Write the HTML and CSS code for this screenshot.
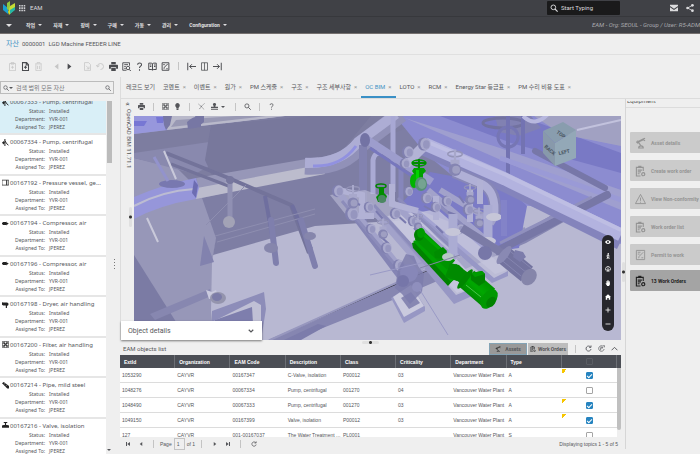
FILE: index.html
```html
<!DOCTYPE html>
<html lang="ko">
<head>
    <meta charset="UTF-8">
    <meta name="viewport" content="width=device-width, initial-scale=1.0">
    <title>EAM - 자산</title>
    <link rel="stylesheet" href="styles.css">
</head>
<body>
    <!-- icon sprite -->
    <svg class="sprite" aria-hidden="true">
        <symbol id="i-print" viewBox="0 0 12 12"><path fill="currentColor" d="M3 0h6v3H3zM1 3.500h10a1 1 0 0 1 1 1V9h-2.500V7h-7v2H0V4.500a1 1 0 0 1 1-1zM3 8h6v4H3z"/></symbol>
        <symbol id="i-clip" viewBox="0 0 12 12"><path fill="none" stroke="currentColor" d="M2 2h8v9.500H2zM4 .8h4v2H4zM6 5v4M4 7h4"/></symbol>
        <symbol id="i-new" viewBox="0 0 12 12"><path fill="none" stroke="currentColor" stroke-width="1.400" d="M2 .8h5.500L10 3.500v7.700H2zM7 1v3h3M6 5v4M4 7h4"/></symbol>
        <symbol id="i-trash" viewBox="0 0 12 12"><path fill="none" stroke="currentColor" d="M1.500 2.500h9M4 2V.8h4V2M2.500 3v8.500h7V3M4.700 5v4.500M7.300 5v4.500"/></symbol>
        <symbol id="i-left" viewBox="0 0 12 12"><path fill="currentColor" d="M8.500 2v8L3.500 6z"/></symbol>
        <symbol id="i-right" viewBox="0 0 12 12"><path fill="currentColor" d="M3.500 2v8l5-4z"/></symbol>
        <symbol id="i-first" viewBox="0 0 12 12"><path fill="currentColor" d="M2 2h2v8H2zM10 2v8L4.500 6z"/></symbol>
        <symbol id="i-last" viewBox="0 0 12 12"><path fill="currentColor" d="M8 2h2v8H8zM2 2v8l5.500-4z"/></symbol>
        <symbol id="i-copy" viewBox="0 0 12 12"><path fill="none" stroke="currentColor" d="M2 .8h5.500L10 3.500v7.700H2zM4 5l4 4M8 6v3H5"/></symbol>
        <symbol id="i-undo" viewBox="0 0 12 12"><path fill="none" stroke="currentColor" stroke-width="1.200" d="M2 6a4 4 0 1 1 4 4M.5 4L2 6.500 4.500 5"/></symbol>
        <symbol id="i-preview" viewBox="0 0 12 12"><path fill="none" stroke="currentColor" stroke-width="1.200" d="M10 5V1H1v10h5M3 3.500h5M3 6h2M3 8.500h2M9.500 10L12 12"/><circle cx="8" cy="8" r="2.300" fill="none" stroke="currentColor" stroke-width="1.200"/></symbol>
        <symbol id="i-help" viewBox="0 0 12 12"><path fill="none" stroke="currentColor" stroke-width="1.400" d="M3.500 3.500C3.500.5 8.800.5 8.700 3.500 8.700 5.500 6 5.500 6 8M6 9.800v1.700"/></symbol>
        <symbol id="i-book" viewBox="0 0 12 12"><path fill="none" stroke="currentColor" stroke-width="1.300" d="M1 1.500h4l1 1 1-1h4V10H7l-1 1-1-1H1zM6 2.500V11M8 4h2M8 6h2M2.500 4h2M2.500 6h2"/></symbol>
        <symbol id="i-edit" viewBox="0 0 12 12"><path fill="none" stroke="currentColor" stroke-width="1.300" d="M1.500 1h9v10h-9zM4 9l.5-2L9 2.500M3 3.500h2M7 9h2"/></symbol>
        <symbol id="i-inleft" viewBox="0 0 12 12"><path fill="none" stroke="currentColor" stroke-width="1.300" d="M1 1v10M12 6H3.500M6.500 3l-3 3 3 3"/></symbol>
        <symbol id="i-cols" viewBox="0 0 12 12"><path fill="none" stroke="currentColor" d="M2 1h8v10H2zM6 1v10"/></symbol>
        <symbol id="i-inright" viewBox="0 0 12 12"><path fill="none" stroke="currentColor" stroke-width="1.300" d="M11 1v10M0 6h8.500M5.500 3l3 3-3 3"/></symbol>
        <symbol id="i-search" viewBox="0 0 12 12"><circle cx="5" cy="5" r="3.500" fill="none" stroke="currentColor" stroke-width="1.400"/><path stroke="currentColor" stroke-width="1.600" d="M7.500 7.500L11.500 11.500"/></symbol>
        <symbol id="i-grid" viewBox="0 0 12 12"><path fill="none" stroke="currentColor" d="M1 1h10v10H1zM1 4.300h10M1 7.700h10M4.300 1v10M7.700 1v10M1 1l10 10M11 1L1 11"/></symbol>
        <symbol id="i-bulb" viewBox="0 0 12 12"><path fill="currentColor" d="M6 0a4 4 0 0 1 2.200 7.300V9H3.800V7.300A4 4 0 0 1 6 0zM4.300 9.500h3.400V12H4.300z"/></symbol>
        <symbol id="i-nodes" viewBox="0 0 12 12"><path fill="none" stroke="currentColor" stroke-width="1.200" stroke-dasharray="2 1" d="M1 2l4.500 4L11 1M5.500 6L2 11M5.500 6l5 5"/></symbol>
        <symbol id="i-stamp" viewBox="0 0 12 12"><path fill="currentColor" d="M6 0a2.600 2.600 0 0 1 1.500 4.800V6.500H12V9H0V6.500h4.500V4.800A2.600 2.600 0 0 1 6 0zM0 10.500h12V12H0z"/></symbol>
        <symbol id="i-reload" viewBox="0 0 12 12"><path fill="none" stroke="currentColor" stroke-width="1.500" d="M9.500 3.500A4.300 4.300 0 1 0 10.300 7M10.300.8V4H7"/></symbol>
        <symbol id="i-export" viewBox="0 0 12 12"><path fill="none" stroke="currentColor" stroke-width="1.200" d="M10.500 7A4.700 4.700 0 1 1 9 2.500M4.500 9V4.500H8L6.500 3M8 4.500L6.500 6.500M9 1h2v3"/></symbol>
        <symbol id="i-up" viewBox="0 0 12 12"><path fill="none" stroke="currentColor" stroke-width="1.600" d="M1 9l5-5 5 5"/></symbol>
        <symbol id="i-down" viewBox="0 0 12 12"><path fill="none" stroke="currentColor" stroke-width="2.400" d="M1.500 3.500L6 8l4.500-4.500"/></symbol>
        <symbol id="i-mail" viewBox="0 0 12 12"><path fill="currentColor" d="M0 1h12v2L6 7 0 3zM0 5l6 4 6-4v6H0z"/></symbol>
        <symbol id="i-share" viewBox="0 0 12 12"><path fill="none" stroke="currentColor" stroke-width="1.300" d="M9.500 2L2.500 6l7 4"/><g fill="currentColor"><circle cx="9.700" cy="2" r="2"/><circle cx="2.300" cy="6" r="2"/><circle cx="9.700" cy="10" r="2"/></g></symbol>
        <symbol id="i-robot" viewBox="0 0 12 12"><path fill="none" stroke="currentColor" stroke-width="1.300" d="M11 .8L8 2M11 3.500L8 2 3.200 4.500 6.500 9M2 5.600l6.500-3"/><circle cx="3" cy="5" r="1.200" fill="none" stroke="currentColor"/><path fill="none" stroke="currentColor" stroke-width="1.200" d="M4 11.400c0-3 5-3 5 0z"/></symbol>
        <symbol id="i-order" viewBox="0 0 12 12"><path fill="none" stroke="currentColor" stroke-width="1.200" d="M9 6V2H1.500v9.500H6M3 5h4.500M3 7h3.500M3 9h2"/><path fill="currentColor" d="M3.500.3h3.500v2.500H3.500z"/><circle cx="9" cy="9.500" r="1.700" fill="none" stroke="currentColor" stroke-width="1.300"/></symbol>
        <symbol id="i-warn" viewBox="0 0 12 12"><path fill="none" stroke="currentColor" d="M6 1l5.500 10H.5zM6 4.500V8M6 9v1"/></symbol>
        <symbol id="i-permit" viewBox="0 0 12 12"><path fill="none" stroke="currentColor" d="M1.500 1h9v10h-9zM3 3h3M3 5h2M4 9.500l.5-2L9 3M7 9h2"/></symbol>
        <symbol id="i-eye" viewBox="0 0 12 12"><path fill="currentColor" fill-rule="evenodd" d="M0 6c3-5 9-5 12 0-3 5-9 5-12 0zm4 0a2 2 0 1 0 4 0 2 2 0 0 0-4 0z"/></symbol>
        <symbol id="i-walk" viewBox="0 0 12 12"><circle cx="6.500" cy="1.500" r="1.500" fill="currentColor"/><path fill="none" stroke="currentColor" stroke-width="1.800" d="M6.500 3L5.500 7.500 4 12M5.500 7.500L8 9v3M3 6l3-2.500L9 6"/></symbol>
        <symbol id="i-orbit" viewBox="0 0 12 12"><path fill="none" stroke="currentColor" stroke-width="1.500" d="M2 9a5 5 0 1 1 8 0M6 3v6M3 7l3 2 3-2"/><path fill="currentColor" d="M3 9h6v2H3z"/></symbol>
        <symbol id="i-hand" viewBox="0 0 12 12"><path fill="currentColor" d="M3 2h1.400v3h.4V.5h1.400V5h.4V1H8v4.200h.4V2.500h1.400V9L8 12H4.500L1 7l1.200-.7L3 7z"/></symbol>
        <symbol id="i-home" viewBox="0 0 12 12"><path fill="currentColor" d="M6 .5L12 6h-1.500v5.500h-3V8h-3v3.500h-3V6H0z"/></symbol>
        <symbol id="i-plus" viewBox="0 0 12 12"><path stroke="currentColor" stroke-width="1.600" d="M6 1v10M1 6h10"/></symbol>
        <symbol id="i-minus" viewBox="0 0 12 12"><path stroke="currentColor" stroke-width="1.600" d="M1 6h10"/></symbol>
        <symbol id="a-pump" viewBox="0 0 12 12"><path fill="none" stroke="currentColor" stroke-width="1.700" d="M5 0v12M0 6.500h5M2.500 4v5M5 3l3 5 3 2.500"/></symbol>
        <symbol id="a-vessel" viewBox="0 0 12 12"><path fill="none" stroke="currentColor" stroke-width="1.200" d="M0 2h8v8.500H0zM8 2h3.500v8.500H8z"/></symbol>
        <symbol id="a-comp" viewBox="0 0 12 12"><path fill="currentColor" d="M1 3.500h6l1-1v2h1.500l2 1.500-2 1.500H8v2l-1-1H1zM0 5h1v2H0z"/></symbol>
        <symbol id="a-dryer" viewBox="0 0 12 12"><path fill="currentColor" d="M0 2l2 .5h6a3 3 0 0 1 .5 6V12H6.500V7.500H2L0 6.500z"/></symbol>
        <symbol id="a-pipe" viewBox="0 0 12 12"><path fill="currentColor" d="M0 2l3-2 9 7v4H9z"/><path stroke="#fff" stroke-width=".7" d="M3 4l3-2M6 7l3-2"/></symbol>
        <symbol id="a-valve" viewBox="0 0 12 12"><path fill="currentColor" d="M3 0h6v1.500H7V5h2l3 1v4H0V6l3-1h2V1.500H3z"/></symbol>
    </svg>

    <header class="topbar">
        <svg class="logo" viewBox="0 0 12 14" aria-label="Logo"><path fill="#1a9fd0" d="M0 3l5 4v6L0 9z"/><path fill="#8fc73e" d="M4 2l3-2v10l-3-2z"/><path fill="#c7dc35" d="M7 5l5-3v6l-6 6-1-3z"/><path fill="#24b6a6" d="M7 9l5-3v3l-5 4z"/></svg>
        <svg class="apps" viewBox="0 0 9 9" aria-hidden="true"><path fill="#cfd0d3" d="M0 0h2v2H0zM3 0h2v2H3zM6 0h2v2H6zM0 3h2v2H0zM3 3h2v2H3zM6 3h2v2H6zM0 6h2v2H0zM3 6h2v2H3zM6 6h2v2H6z"/></svg>
        <span class="brand">EAM</span>
        <label class="top-search">
            <svg class="icon"><use href="#i-search"/></svg>
            <input type="text" placeholder="Start Typing" aria-label="Start Typing">
        </label>
        <button class="top-btn" aria-label="Mail"><svg class="icon"><use href="#i-mail"/></svg></button>
        <button class="top-btn" aria-label="Share"><svg class="icon"><use href="#i-share"/></svg></button>
    </header>

    <nav class="menubar">
        <button class="menu-toggle" aria-label="Menu"><i class="caret big"></i></button>
        <button>작업<i class="caret"></i></button>
        <button>자재<i class="caret"></i></button>
        <button>장비<i class="caret"></i></button>
        <button>구매<i class="caret"></i></button>
        <button>가동<i class="caret"></i></button>
        <button>관리<i class="caret"></i></button>
        <button>Configuration<i class="caret"></i></button>
        <span class="session">EAM - Org: SEOUL - Group / User: R5-ADM</span>
    </nav>

    <div class="title-row">
        <a href="#">자산</a>
        <span>0000001</span>
        <span>LGD Machine FEEDER LINE</span>
    </div>

    <div class="toolbar">
        <div class="tool-group">
            <button disabled aria-label="Save"><svg class="icon"><use href="#i-clip"/></svg></button>
            <button aria-label="New"><svg class="icon"><use href="#i-new"/></svg></button>
            <button disabled aria-label="Delete"><svg class="icon"><use href="#i-trash"/></svg></button>
        </div>
        <div class="tool-group">
            <button disabled aria-label="Previous"><svg class="icon"><use href="#i-left"/></svg></button>
            <button aria-label="Next"><svg class="icon"><use href="#i-right"/></svg></button>
        </div>
        <div class="tool-group">
            <button disabled aria-label="Copy"><svg class="icon"><use href="#i-copy"/></svg></button>
            <button disabled aria-label="Undo"><svg class="icon"><use href="#i-undo"/></svg></button>
            <button aria-label="Print"><svg class="icon"><use href="#i-print"/></svg></button>
            <button aria-label="Preview"><svg class="icon"><use href="#i-preview"/></svg></button>
            <button aria-label="Help"><svg class="icon"><use href="#i-help"/></svg></button>
            <button aria-label="Manual"><svg class="icon"><use href="#i-book"/></svg></button>
            <button aria-label="Edit"><svg class="icon"><use href="#i-edit"/></svg></button>
            <i class="sep"></i>
            <button aria-label="Collapse left"><svg class="icon"><use href="#i-inleft"/></svg></button>
            <button aria-label="Split"><svg class="icon"><use href="#i-cols"/></svg></button>
            <button aria-label="Collapse right"><svg class="icon"><use href="#i-inright"/></svg></button>
        </div>
    </div>

    <main class="main">
        <aside class="sidebar">
            <div class="side-search">
                <svg class="icon"><use href="#i-search"/></svg><i class="caret"></i>
                <input type="text" placeholder="검색 범위 모든 자산" aria-label="검색">
                <svg class="icon"><use href="#i-search"/></svg>
            </div>
            <div class="list-wrap">
                <ul class="asset-list">
                    <li class="selected"><h3><svg class="icon"><use href="#a-pump"/></svg>00067333 - Pump, centrifugal</h3><dl><dt>Status:</dt><dd>Installed</dd><dt>Department:</dt><dd>YVR-001</dd><dt>Assigned To:</dt><dd>JPEREZ</dd></dl></li>
                    <li><h3><svg class="icon"><use href="#a-pump"/></svg>00067334 - Pump, centrifugal</h3><dl><dt>Status:</dt><dd>Installed</dd><dt>Department:</dt><dd>YVR-001</dd><dt>Assigned To:</dt><dd>JPEREZ</dd></dl></li>
                    <li><h3><svg class="icon"><use href="#a-vessel"/></svg>00167192 - Pressure vessel, ge...</h3><dl><dt>Status:</dt><dd>Installed</dd><dt>Department:</dt><dd>YVR-001</dd><dt>Assigned To:</dt><dd>JPEREZ</dd></dl></li>
                    <li><h3><svg class="icon"><use href="#a-comp"/></svg>00167194 - Compressor, air</h3><dl><dt>Status:</dt><dd>Installed</dd><dt>Department:</dt><dd>YVR-001</dd><dt>Assigned To:</dt><dd>JPEREZ</dd></dl></li>
                    <li><h3><svg class="icon"><use href="#a-comp"/></svg>00167196 - Compressor, air</h3><dl><dt>Status:</dt><dd>Installed</dd><dt>Department:</dt><dd>YVR-001</dd><dt>Assigned To:</dt><dd>JPEREZ</dd></dl></li>
                    <li><h3><svg class="icon"><use href="#a-dryer"/></svg>00167198 - Dryer, air handling</h3><dl><dt>Status:</dt><dd>Installed</dd><dt>Department:</dt><dd>YVR-001</dd><dt>Assigned To:</dt><dd>JPEREZ</dd></dl></li>
                    <li><h3><svg class="icon"><use href="#i-grid"/></svg>00167200 - Filter, air handling</h3><dl><dt>Status:</dt><dd>Installed</dd><dt>Department:</dt><dd>YVR-001</dd><dt>Assigned To:</dt><dd>JPEREZ</dd></dl></li>
                    <li><h3><svg class="icon"><use href="#a-pipe"/></svg>00167214 - Pipe, mild steel</h3><dl><dt>Status:</dt><dd>Installed</dd><dt>Department:</dt><dd>YVR-001</dd><dt>Assigned To:</dt><dd>JPEREZ</dd></dl></li>
                    <li><h3><svg class="icon"><use href="#a-valve"/></svg>00167216 - Valve, isolation</h3><dl><dt>Status:</dt><dd>Installed</dd><dt>Department:</dt><dd>YVR-001</dd><dt>Assigned To:</dt><dd>JPEREZ</dd></dl></li>
                </ul>
                <div class="side-scroll"><i class="thumb"></i><i class="caret"></i></div>
                <div class="grip"><i></i><i></i><i></i><i></i></div>
            </div>
        </aside>

        <section class="content">
            <div class="tabs">
                <button>레코드 보기</button>
                <button>코멘트<b>×</b></button>
                <button>이벤트<b>×</b></button>
                <button>원가<b>×</b></button>
                <button>PM 스케줄<b>×</b></button>
                <button>구조<b>×</b></button>
                <button>구조 세부사항<b>×</b></button>
                <button class="active">OC BIM<b>×</b></button>
                <button>LOTO<b>×</b></button>
                <button>RCM<b>×</b></button>
                <button>Energy Star 등급표<b>×</b></button>
                <button>PM 수리 비용 도표<b>×</b></button>
            </div>

            <div class="workspace">
                <div class="center">
                    <div class="bim">
                        <div class="rail">
                            <span class="chev">«</span>
                            <span class="rail-title">OpenCAD BIM 11.71.1</span>
                        </div>
                        <div class="viewer-col">
                            <div class="viewer-tools">
                                <button aria-label="Print"><svg class="icon"><use href="#i-print"/></svg></button>
                                <i class="sep"></i>
                                <button aria-label="Grid"><svg class="icon"><use href="#i-grid"/></svg></button>
                                <button aria-label="Light"><svg class="icon"><use href="#i-bulb"/></svg></button>
                                <i class="sep"></i>
                                <button aria-label="Nodes"><svg class="icon"><use href="#i-nodes"/></svg></button>
                                <button class="wide" aria-label="Stamp"><svg class="icon"><use href="#i-stamp"/></svg><i class="caret"></i></button>
                                <i class="sep"></i>
                                <button aria-label="Search"><svg class="icon"><use href="#i-search"/></svg></button>
                                <i class="sep"></i>
                                <button aria-label="Help"><svg class="icon"><use href="#i-help"/></svg></button>
                            </div>
                            <div class="scene-wrap">
                                <svg class="scene" viewBox="134 116 487 224" preserveAspectRatio="xMidYMid slice">
                                    <defs>
                                        <linearGradient id="gm" x1="0" y1="1" x2="1" y2="0"><stop offset="0" stop-color="#008200"/><stop offset=".5" stop-color="#00a800"/><stop offset="1" stop-color="#008c00"/></linearGradient>
                                        <symbol id="flange" viewBox="0 0 16 16"><ellipse cx="7" cy="8" rx="6" ry="7" fill="#8080b0"/><ellipse cx="9" cy="8" rx="5.500" ry="6.500" fill="#a9a9cc"/><ellipse cx="10" cy="8.500" rx="3.500" ry="4.500" fill="#9696bf"/></symbol>
                                        <symbol id="valve" viewBox="0 0 16 24"><ellipse cx="8" cy="4" rx="6.500" ry="2.500" fill="none" stroke="#9595b8" stroke-width="1.300"/><path fill="#a8a8cb" d="M7 0h2v9h3v4h-1v6H5v-6H4V9h3z"/><circle cx="8" cy="18" r="5.500" fill="#8585b2"/><circle cx="9" cy="18" r="3.500" fill="#9f9fc2"/></symbol>
                                    </defs>
                                    <rect x="134" y="116" width="487" height="224" fill="#b8b8d2"/>
                                    <!-- left wall and floor -->
                                    <path fill="#9797b8" d="M134 116h90v80l-12 66-1 49 3 29h-80z"/>
                                    <path fill="#7b7ba4" d="M134 255l49 78v7h-49z"/>
                                    <path fill="#8787b0" d="M150 314l60-25 1 7-56 24z"/>
                                    <path fill="#8282ae" d="M204 236l10 26-14 4z"/>
                                    <!-- dark ceiling -->
                                    <path fill="#7e7ea4" d="M202 198l116-26 82-56h70v100l-155 10-102 29 3-17z"/>
                                    <path fill="#7d7da0" d="M134 134l151-18h150l-120 50-118 22-20-20-43-10z"/>
                                    <path fill="#8989ae" d="M134 153l75-11 4 22-18 10-61-16z"/>
                                    <path fill="#78789c" d="M211 125l100-9h60l-36 43-122 19-8-18z"/>
                                    <path fill="#b9b9ca" d="M170 116h115l-118 14z"/><path fill="#9999b4" d="M176 120l60-4h30l-95 11z"/>
                                    <path fill="#9797dc" d="M134 116h32l1 14-33 4z"/><path fill="#7777d4" d="M134 121h13l-3 5h-10zM156 117h9l-2 6h-6z"/>
                                    <path fill="#7777a4" d="M163 116h9l-2 9-4 5-2-5zM187 122q8-7 14-5v10l-13 2zM195 116h9v6l-5 4z"/>
                                    <path fill="#9797b8" d="M196 178l122-21 5 8-124 24z"/><path fill="#bcbccd" d="M197 188l122-23 6 9-129 25z"/>
                                    <path fill="#7070a8" d="M311 159l6 2 4 10-10-6z"/>
                                    <path fill="#9696da" d="M134 197q30-13 62-19l3 10-3 11q-36 6-62 20z"/>
                                    <path fill="none" stroke="#bcbcd2" stroke-width="2" d="M134 206q28-15 60-17"/>
                                    <path fill="#6d6db2" d="M194 180l4 5-2 13-4-5z"/><ellipse cx="172" cy="184" rx="13" ry="4" fill="#7878b0"/>
                                    <path stroke="#9393cc" stroke-width="3" d="M154 157l14 24"/>
                                    <path fill="none" stroke="#73739a" stroke-width="4" d="M166 153l65 26 60 26 18 48"/><path stroke="#73739a" stroke-width="3" d="M171 164l60 23"/>
                                    <path stroke="#c9c9da" stroke-width="2" d="M164 151l12 28M147 218l11 24"/>
                                    <path stroke="#6f6f9f" stroke-width="4" d="M265 196l9 50M292 205l19 44"/>
                                    <path fill="none" stroke="#8e8eb0" stroke-width="1" d="M215 236l100-27M217 242l98-28M206 225l40-40"/>
                                    <path stroke="#7f7fad" stroke-width="6" stroke-linecap="round" d="M271 220l5 43M301 220l14 46"/><ellipse cx="271" cy="248" rx="7" ry="5" fill="#8686ac"/><ellipse cx="310" cy="236" rx="6" ry="4" fill="#8686ac"/>
                                    <path stroke="#9090b3" stroke-width="5" d="M230 179v40"/><circle cx="230" cy="180" r="4" fill="#77779e"/><circle cx="229" cy="222" r="6" fill="#a3a3b6"/>
                                    <path fill="#cacade" d="M206 290l6 2 4-2 2 8-9 1z"/><ellipse cx="218" cy="298" rx="8" ry="6" fill="#9494ad"/><ellipse cx="217" cy="297" rx="5" ry="4" fill="#7c7ca8"/>
                                    <path fill="#8d8db9" d="M212 311l52-19 2 17-5 31h-49z"/><path fill="#c0c0d5" d="M214 321l40-20 7 4v20h-47z"/><path fill="#7e7ead" d="M215 320l37-13 2 33h-39z"/>
                                    <!-- long floor beam -->
                                    <path fill="#8686b1" d="M268 340l132-58 128-53 93-55v16l-95 53-126 54-107 43z"/><path stroke="#9797be" stroke-width="2" d="M270 340l135-61 120-51"/>
                                    <path fill="#7c7cab" d="M284 340l34-16 8 2-25 14z"/>
                                    <!-- right purple structure -->
                                    <path fill="#8c8cd0" d="M395 116h226v128l-90-38-46-3-60-50z"/>
                                    <path fill="#9f9fcf" d="M405 118l95 30 121 42v20l-120-50z"/><path fill="#7979c5" d="M440 116h80l101 37v20l-110-30z"/><path fill="#a1a1c2" d="M534 116h87v30l-60-12z"/>
                                    <path fill="#8181b2" d="M495 116h36l10 12-22 8-20-4z"/><ellipse cx="503" cy="123" rx="20" ry="5" fill="none" stroke="#7272a0" stroke-width="3"/><circle cx="508" cy="137" r="10" fill="none" stroke="#7676b4" stroke-width="3"/><path stroke="#7373b2" stroke-width="4" d="M508 116v90M523 116v38"/>
                                    <path fill="none" stroke="#b8b8df" stroke-width="4" d="M523 116q12 12 25-2"/><path stroke="#c2c2dd" stroke-width="2" d="M577 130l44-10"/>
                                    <path stroke="#7777a8" stroke-width="6" stroke-linecap="round" d="M535 151l70 37"/><path stroke="#9a9ad6" stroke-width="5" d="M500 158l121 42"/>
                                    <path fill="#7b7bc6" d="M430 172l75 14 22 20-8 42-60 8-60-50z"/>
                                    <path stroke="#7777a6" stroke-width="8" stroke-linecap="round" d="M495 252l112-57"/><path stroke="#9090bd" stroke-width="3" d="M500 243l92-46"/>
                                    <!-- upper big pipes -->
                                    <path fill="none" stroke="#9191b8" stroke-width="17" d="M305 166q38 2 56-22l40-30"/><path fill="none" stroke="#adadd4" stroke-width="10" d="M305 163q36 1 53-21l38-28"/><path fill="none" stroke="#9191e0" stroke-width="3" d="M313 166q28 1 43-20"/>
                                    <path stroke="#8282b0" stroke-width="8" d="M363 145v78"/><path stroke="#a8a8d4" stroke-width="5" d="M393 116v76"/><path stroke="#8686bb" stroke-width="5" d="M401 165v40"/>
                                    <path fill="none" stroke="#aaaad4" stroke-width="5" d="M373 194v-34q2-9 9-6"/>
                                    <path stroke="#9d9dcd" stroke-width="8" d="M366 139l66 43"/><path stroke="#7777bd" stroke-width="3" d="M370 148l57 38"/><ellipse cx="365" cy="140" rx="5" ry="7" fill="#7373a4"/>
                                    <path stroke="#8484bc" stroke-width="18" d="M425 147l80 36 116 58"/><path fill="none" stroke="#b3b3df" stroke-width="13" d="M425 144l80 35 116 56"/><path fill="none" stroke="#bebee3" stroke-width="4" d="M430 143l76 32 115 55"/>
                                    <path stroke="#b3b3d6" stroke-width="10" d="M426 144l-20 20"/><use href="#flange" x="417" y="136" width="15" height="16"/><use href="#flange" x="401" y="144" width="14" height="16"/><use href="#flange" x="399" y="157" width="12" height="13"/>
                                    <path fill="none" stroke="#8787b7" stroke-width="12" d="M454 172l28 12q16 8 12 33"/><path fill="none" stroke="#b0b0d6" stroke-width="8" d="M454 172l28 12q15 8 12 33"/>
                                    <use href="#valve" x="446" y="149" width="18" height="28"/>
                                    <!-- base rails -->
                                    <path fill="#bebed8" d="M330 195l35-5 120 45 22 38-53 30-70-84-38-4z" opacity=".6"/>
                                    <path fill="#9797c4" d="M382 217l6-1 68 79 25-10v7l-27 12z"/><path fill="#c8c8de" d="M387 216l70 77 22-9-65-72z" opacity=".8"/>
                                    <path fill="#9797c6" d="M418 213l76 65 14-7v5l-16 7-78-68z"/><path fill="#c4c4dc" d="M421 212l74 62 12-4-70-61z" opacity=".8"/>
                                    <path fill="#8484b4" d="M346 210l8-2 52 70-5 5z"/><path fill="#9797c4" d="M391 298l20-13 14 22v4l-21 12z"/><path fill="#cacade" d="M393 297l18-12 13 21-20 11z"/><path fill="#8787b2" d="M401 298l10-6 9 11-11 6z"/>
                                    <!-- pipework runs -->
                                    <path fill="none" stroke="#a2a2ca" stroke-width="6" d="M338 192l44 53 24 30M370 207l54 62M385 196l70 64M428 190l70 60M440 190l55 33"/>
                                    <path fill="none" stroke="#8c8cba" stroke-width="3" d="M342 201l60 72M374 205l48 52M398 198l56 52M430 198l62 52"/>
                                    <path fill="none" stroke="#b2b2d5" stroke-width="6" d="M338 190l24 5v24M352 216h22M392 184v20l26 7M436 196v24M470 190v32M480 180v24"/>
                                    <path fill="none" stroke="#7a7aaf" stroke-width="2" d="M352 201l8 4M376 211l7 8M396 214l10 9M424 206l9 5M448 212l8 3M459 196l5 7M414 228l8 8M380 236l9 8M436 226l7 7"/>
                                    <use href="#flange" x="331" y="183" width="14" height="16"/><use href="#flange" x="344" y="205" width="16" height="18"/><use href="#flange" x="363" y="200" width="12" height="14"/><use href="#flange" x="365" y="222" width="12" height="14"/><use href="#flange" x="380" y="240" width="13" height="16"/><use href="#flange" x="392" y="257" width="14" height="17"/><use href="#flange" x="389" y="206" width="13" height="15"/><use href="#flange" x="403" y="185" width="11" height="13"/><use href="#flange" x="420" y="191" width="13" height="14"/><use href="#flange" x="430" y="200" width="12" height="14"/><use href="#flange" x="441" y="194" width="12" height="14"/><use href="#flange" x="462" y="202" width="13" height="15"/><use href="#flange" x="454" y="222" width="12" height="14"/><use href="#flange" x="407" y="214" width="12" height="14"/>
                                    <use href="#valve" x="345" y="184" width="16" height="26"/><use href="#valve" x="463" y="182" width="14" height="25"/><use href="#valve" x="376" y="218" width="14" height="22"/><use href="#valve" x="412" y="212" width="12" height="20"/><use href="#valve" x="472" y="206" width="14" height="24"/>
                                    <path fill="none" stroke="#abacd3" stroke-width="9" d="M453 214v42M488 205v36"/><ellipse cx="453" cy="232" rx="8" ry="4" fill="#c6c6d8"/><ellipse cx="488" cy="241" rx="8" ry="4" fill="#c6c6d8"/><ellipse cx="494" cy="217" rx="8" ry="4" fill="#c6c6d8"/><path stroke="#8383c8" stroke-width="6" d="M504 200v36"/>
                                    <!-- ghost pump -->
                                    <path fill="#7c7cad" d="M398 270l8-16 8 2 4 10 6 8-2 18-12 12-8-10-7-6z" opacity=".85"/><circle cx="409" cy="273" r="9" fill="#8787b8"/><circle cx="403" cy="281" r="6" fill="#7676a9"/><circle cx="417" cy="287" r="5" fill="#8f8fbd"/><path stroke="#9a9ac6" stroke-width="1" d="M420 290l28 45M370 275l85-20"/>
                                    <!-- grey motor -->
                                    <path stroke="#7b7ba6" stroke-width="8" d="M462 228l45 28"/><circle cx="485" cy="253" r="7" fill="#7777a8"/><path stroke="#73739f" stroke-width="19" d="M505 256l22 18"/><path fill="none" stroke="#8585b0" stroke-width="1" d="M506 248l25 20M502 253l25 20M499 258l22 18"/><ellipse cx="529" cy="277" rx="7" ry="9" fill="#8585aa" transform="rotate(38 529 277)"/><path fill="#7c7cab" d="M515 250l8 2 3 5-6 5-7-5z"/><ellipse cx="504" cy="255" rx="4" ry="11" fill="#8989b3" transform="rotate(38 504 255)"/>
                                    <!-- selected parts -->
                                    <path fill="#008200" d="M412 243l5-2 38 37-7 8-35-38z"/><path fill="#00a000" d="M413 241l7-2 36 32 2 6-7 5z"/>
                                    <path stroke="#009400" stroke-width="12" d="M419 235l32 30"/><path stroke="#00a800" stroke-width="3" d="M423 234l28 25"/><ellipse cx="419" cy="235" rx="5" ry="6" fill="#008200"/><ellipse cx="421" cy="233" rx="4" ry="5" fill="#009a00"/>
                                    <path fill="#008c00" d="M434 252l9-5 4 4-3 8-9-1zM450 263l9 2 4 4-6 12-12-4z"/><ellipse cx="448" cy="257" rx="6" ry="4" fill="#b9c6c8"/><path stroke="#008a00" stroke-width="13" d="M452 269l15 11"/><path stroke="url(#gm)" stroke-width="22" d="M467 279l21 18"/><ellipse cx="489" cy="299" rx="7" ry="11" fill="#009800" transform="rotate(38 489 299)"/><ellipse cx="491" cy="302" rx="4" ry="6" fill="#008200" transform="rotate(38 491 302)"/><path fill="#008200" d="M471 273l11-2 3 3v8l-6 4-8-6z"/><path fill="#009c00" d="M471 273l11-2 3 3-10 3z"/><path stroke="#4cc44c" stroke-width="1" d="M466 285l15 12"/><ellipse cx="465" cy="279" rx="3" ry="12" fill="#008700" transform="rotate(38 465 279)"/><path stroke="#8585a8" stroke-width="1" d="M420 268l40-13"/>
                                    <ellipse cx="419" cy="163" rx="7" ry="3" fill="none" stroke="#009800" stroke-width="1.500"/><path stroke="#008d00" stroke-width="2" d="M412 163h14M419 159v10"/><path fill="#00a000" d="M414 168h10l2 3-3 3v10h-9v-10l-2-3z"/><ellipse cx="414" cy="181" rx="4" ry="7" fill="#00b400"/><path fill="#00d400" d="M416 170h3v13h-3z"/><ellipse cx="421" cy="184" rx="6" ry="7" fill="#568f74"/><ellipse cx="422" cy="184" rx="4" ry="5" fill="#75a391"/>
                                    <ellipse cx="381" cy="186" rx="5" ry="2" fill="none" stroke="#008300" stroke-width="1.500"/><path fill="#008d00" d="M379 187h5v6l3 3-2 6h-7l-2-5 3-3z"/><ellipse cx="382" cy="199" rx="4" ry="4" fill="#4b8763"/>
                                    <!-- view cube -->
                                    <path fill="#8899ab" d="M543 131l12 12v23l-12-13z"/><path fill="#93a8b7" d="M555 143l21-13v28l-21 8z"/><path fill="#899dae" d="M543 131l20-9 13 8-21 13z"/>
                                    <g class="cube-text"><text transform="translate(559 155) rotate(-13)">LEFT</text><text transform="translate(544 147) rotate(42)">BACK</text><text transform="translate(556 133) rotate(35)">TOP</text></g>
                                </svg>
                                <div class="nav-pill">
                                    <button aria-label="Look"><svg class="icon"><use href="#i-eye"/></svg></button>
                                    <button aria-label="Walk"><svg class="icon"><use href="#i-walk"/></svg></button>
                                    <button aria-label="Orbit"><svg class="icon"><use href="#i-orbit"/></svg></button>
                                    <button aria-label="Pan"><svg class="icon"><use href="#i-hand"/></svg></button>
                                    <button aria-label="Home"><svg class="icon"><use href="#i-home"/></svg></button>
                                    <button aria-label="Zoom in"><svg class="icon"><use href="#i-plus"/></svg></button>
                                    <button aria-label="Zoom out"><svg class="icon"><use href="#i-minus"/></svg></button>
                                </div>
                            </div>
                        </div>
                        <button class="object-details">Object details<svg class="icon"><use href="#i-down"/></svg></button>
                        <i class="handle rail-handle"></i>
                        <i class="handle side-handle"></i>
                        <i class="handle bottom-handle"></i>
                    </div>

                    <div class="objects">
                        <div class="objects-head">
                            <h2>EAM objects list</h2>
                            <button class="chip on"><svg class="icon"><use href="#i-robot"/></svg>Assets</button>
                            <button class="chip"><svg class="icon"><use href="#i-order"/></svg>Work Orders</button>
                            <i class="sep"></i>
                            <button class="mini" aria-label="Refresh"><svg class="icon"><use href="#i-reload"/></svg></button>
                            <button class="mini" aria-label="Export"><svg class="icon"><use href="#i-export"/></svg></button>
                            <button class="mini" aria-label="Collapse"><svg class="icon"><use href="#i-up"/></svg></button>
                        </div>
                        <div class="table-wrap">
                            <table>
                                <thead>
                                    <tr><th>ExtId</th><th>Organization</th><th>EAM Code</th><th>Description</th><th>Class</th><th>Criticality</th><th>Department</th><th>Type</th><th class="check"><input type="checkbox" aria-label="Select all"></th></tr>
                                </thead>
                                <tbody>
                                    <tr><td>1053290</td><td>CAYVR</td><td>00167347</td><td>C-Valve, isolation</td><td>P00012</td><td>03</td><td>Vancouver Water Plant</td><td>A</td><td class="check flag"><input type="checkbox" aria-label="1053290" checked></td></tr>
                                    <tr><td>1048276</td><td>CAYVR</td><td>00067334</td><td>Pump, centrifugal</td><td>001270</td><td>04</td><td>Vancouver Water Plant</td><td>A</td><td class="check"><input type="checkbox" aria-label="1048276"></td></tr>
                                    <tr><td>1048490</td><td>CAYVR</td><td>00067333</td><td>Pump, centrifugal</td><td>001270</td><td>03</td><td>Vancouver Water Plant</td><td>A</td><td class="check flag"><input type="checkbox" aria-label="1048490" checked></td></tr>
                                    <tr><td>1049150</td><td>CAYVR</td><td>00167399</td><td>Valve, isolation</td><td>P00012</td><td>03</td><td>Vancouver Water Plant</td><td>A</td><td class="check flag"><input type="checkbox" aria-label="1049150" checked></td></tr>
                                    <tr><td>127</td><td>CAYVR</td><td>001-00167037</td><td>The Water Treatment ...</td><td>PL0001</td><td></td><td>Vancouver Water Plant</td><td>S</td><td class="check"><input type="checkbox" aria-label="127"></td></tr>
                                </tbody>
                            </table>
                            <div class="table-scroll"><i class="thumb"></i></div>
                        </div>
                        <div class="pager">
                            <button aria-label="First page"><svg class="icon"><use href="#i-first"/></svg></button>
                            <button aria-label="Previous page"><svg class="icon"><use href="#i-left"/></svg></button>
                            <i class="sep"></i>
                            <label for="page">Page</label>
                            <input type="text" id="page" value="1">
                            <span>of 1</span>
                            <i class="sep"></i>
                            <button aria-label="Next page"><svg class="icon"><use href="#i-right"/></svg></button>
                            <button aria-label="Last page"><svg class="icon"><use href="#i-last"/></svg></button>
                            <i class="sep"></i>
                            <button aria-label="Reload"><svg class="icon"><use href="#i-reload"/></svg></button>
                            <span class="count">Displaying topics 1 - 5 of 5</span>
                        </div>
                    </div>
                </div>

                <aside class="actions">
                    <h2><span>Equipment</span></h2>
                    <button><svg class="icon"><use href="#i-robot"/></svg>Asset details</button>
                    <button><svg class="icon"><use href="#i-order"/></svg>Create work order</button>
                    <button><svg class="icon"><use href="#i-warn"/></svg>View Non-conformity</button>
                    <button><svg class="icon"><use href="#i-order"/></svg>Work order list</button>
                    <button><svg class="icon"><use href="#i-permit"/></svg>Permit to work</button>
                    <button class="current"><svg class="icon"><use href="#i-order"/></svg>13 Work Orders</button>
                </aside>
            </div>
        </section>
    </main>
</body>
</html>
```
FILE: styles.css
```css
* {
    box-sizing: border-box;
}

body {
    margin: 0;
    height: 100vh;
    display: flex;
    flex-direction: column;
    overflow: hidden;
    background-color: #efefef;
    color: #55565a;
    font-family: Roboto, "Noto Sans CJK KR", sans-serif;
    font-size: 6px;
    line-height: 8px;
    white-space: nowrap;
}

button, input {
    font: inherit;
    color: inherit;
    background: none;
    border: none;
    padding: 0;
    margin: 0;
}

button {
    display: flex;
    align-items: center;
    justify-content: center;
    cursor: pointer;
}

h2, h3, ul, dl, dd {
    margin: 0;
    padding: 0;
    font-weight: normal;
    font-size: inherit;
}

.sprite {
    position: absolute;
    width: 0;
    height: 0;
}

.icon {
    width: 8px;
    height: 8px;
    flex: none;
}

.caret {
    border: 2px solid transparent;
    border-top-color: currentColor;
    border-bottom: none;
    flex: none;
}

.caret.big {
    border-width: 3px;
    border-bottom: none;
}

.sep {
    width: 13px;
    height: 8px;
    background: linear-gradient(#c4c4c4, #c4c4c4) center / 1px 100% no-repeat;
}

/* header */
.topbar {
    display: flex;
    align-items: center;
    height: 17px;
    padding: 0 4px 0 3px;
    background-color: #404146;
    border-bottom: 1px solid #37383c;
    color: #dcdcde;
    flex: none;
}

.logo {
    width: 12px;
    height: 14px;
    margin-right: 4px;
}

.apps {
    width: 7px;
    height: 7px;
    margin-right: 4px;
}

.brand {
    flex: 1;
}

.top-search {
    display: flex;
    align-items: center;
    gap: 3px;
    width: 73px;
    height: 14px;
    padding: 0 3px;
    margin-right: 44px;
    border-radius: 1px;
    background-color: #1a1a1b;
}

.top-search input {
    width: 50px;
}

.top-search input::placeholder {
    color: #dcdcde;
}

.top-btn {
    width: 12px;
    margin-left: 4px;
}

.menubar {
    display: flex;
    align-items: center;
    gap: 11px;
    height: 17px;
    padding-left: 6px;
    background-color: #404146;
    border-bottom: 1px solid #75706f;
    color: #e0e0e2;
    font-size: 5px;
    font-weight: bold;
    flex: none;
}

.menubar button {
    gap: 3px;
}

.menu-toggle {
    margin-right: 3px;
}

.session {
    margin-left: auto;
    font-size: 6px;
    font-weight: normal;
    font-style: italic;
    color: #a9aaae;
}

.title-row {
    display: flex;
    align-items: center;
    gap: 3px;
    height: 21px;
    padding-left: 6px;
    border-bottom: 1px solid #e0e0e0;
    flex: none;
}

.title-row a {
    color: #3f93c4;
    font-size: 7px;
    text-decoration: none;
}

.toolbar {
    display: flex;
    align-items: center;
    gap: 5px;
    height: 22px;
    padding-left: 6px;
    flex: none;
}

.tool-group {
    display: flex;
    align-items: center;
}

.tool-group button {
    width: 13px;
    color: #4a4b4f;
}

.tool-group .icon {
    width: 9px;
    height: 9px;
}

.tool-group button:disabled {
    color: #c6c6c6;
}

.main {
    display: flex;
    flex: 1;
    min-height: 0;
}

/* asset list */
.sidebar {
    display: flex;
    flex-direction: column;
    width: 120px;
    flex: none;
}

.side-search {
    display: flex;
    align-items: center;
    height: 13px;
    margin: 4px 6px 7px 0;
    padding: 0 2px;
    border: 1px solid #bcbcbc;
    flex: none;
}

.side-search .icon {
    width: 6px;
    height: 6px;
}

.side-search input {
    flex: 1;
    min-width: 0;
    padding-left: 3px;
}

.side-search input::placeholder {
    color: #77787b;
}

.list-wrap {
    display: flex;
    flex: 1;
    min-height: 0;
    overflow: hidden;
}

.asset-list {
    display: grid;
    grid-auto-rows: 1fr;
    width: 106px;
    height: calc(100% + 11px);
    margin-top: -6px;
    list-style: none;
    font-family: "Noto Sans", "Open Sans", sans-serif;
    font-size: 5px;
}

.asset-list li {
    min-height: 0;
    padding-top: 2px;
    background-color: #fff;
    border-bottom: 2px solid #e6e6e6;
}

.asset-list .selected {
    background-color: #d9eff7;
}

.asset-list h3 {
    display: flex;
    align-items: center;
    gap: 1px;
    padding-left: 2px;
    font-size: 6px;
    line-height: 10px;
}

.asset-list h3 .icon {
    width: 7px;
    height: 7px;
    color: #222;
}

.asset-list dl {
    display: grid;
    grid-template-columns: 45px 1fr;
    column-gap: 4px;
    line-height: 8px;
}

.asset-list dt {
    text-align: right;
}

.side-scroll {
    display: flex;
    flex-direction: column;
    justify-content: space-between;
    align-items: center;
    width: 6px;
    padding-bottom: 3px;
}

.side-scroll .thumb {
    width: 5px;
    height: 62px;
    background-color: #bbb;
}

.grip {
    display: flex;
    flex-direction: column;
    justify-content: center;
    gap: 2px;
    padding: 0 2px 28px;
}

.grip i {
    width: 1px;
    height: 1px;
    background-color: #777;
}

/* tabs */
.content {
    display: flex;
    flex-direction: column;
    flex: 1;
    min-width: 0;
}

.tabs {
    display: flex;
    height: 22px;
    padding-left: 1px;
    border-left: 1px solid #dcdcdc;
    border-bottom: 1px solid #dcdcdc;
    flex: none;
}

.tabs button {
    gap: 3px;
    padding: 0 4px;
    border-bottom: 2px solid transparent;
}

.tabs b {
    font-weight: normal;
    color: #999;
}

.tabs .active {
    color: #3f93c4;
    border-bottom-color: #3a90c6;
}

.workspace {
    display: flex;
    flex: 1;
    min-height: 0;
}

.center {
    display: flex;
    flex-direction: column;
    flex: 1;
    min-width: 0;
    padding-right: 4px;
}

.bim {
    position: relative;
    display: flex;
    flex: 1;
    min-height: 0;
    margin-bottom: 1px;
}

.rail {
    display: flex;
    flex-direction: column;
    width: 14px;
    border-left: 1px solid #dcdcdc;
}

.chev {
    height: 10px;
    width: 9px;
    text-align: center;
    font-size: 8px;
    transform: rotate(90deg);
}

.rail-title {
    writing-mode: vertical-rl;
    line-height: 9px;
}

.viewer-col {
    display: flex;
    flex-direction: column;
    flex: 1;
    min-width: 0;
}

.viewer-tools {
    display: flex;
    align-items: center;
    height: 17px;
    padding: 0 0 2px 1px;
    flex: none;
}

.viewer-tools button, .viewer-tools .sep {
    width: 12px;
}

.viewer-tools .icon {
    width: 7px;
    height: 7px;
}

.viewer-tools .wide {
    width: 22px;
    gap: 3px;
}

.scene-wrap {
    position: relative;
    flex: 1;
    min-height: 0;
}

.scene {
    display: block;
    width: 100%;
    height: 100%;
}

.cube-text {
    font-size: 5px;
    font-weight: bold;
    fill: #4a5663;
}

.nav-pill {
    position: absolute;
    right: 7px;
    bottom: 9px;
    display: flex;
    flex-direction: column;
    justify-content: space-around;
    width: 12px;
    height: 96px;
    border-radius: 6px;
    background-color: #26262d;
    color: #fff;
}

.nav-pill .icon {
    width: 6px;
    height: 6px;
}

.object-details {
    position: absolute;
    left: 1px;
    bottom: 0;
    justify-content: space-between;
    width: 141px;
    height: 19px;
    padding: 0 8px 0 7px;
    background-color: #fff;
    box-shadow: 0 1px 2px rgba(0, 0, 0, 0.5);
    font-size: 7px;
}

.object-details .icon {
    width: 6px;
    height: 6px;
}

.handle {
    position: absolute;
    width: 3px;
    height: 20px;
    border-radius: 2px;
    background: radial-gradient(circle, #333 1px, #e0e0e0 2px);
}

.rail-handle {
    left: 9px;
    top: 108px;
}

.side-handle {
    right: -4px;
    top: 163px;
}

.bottom-handle {
    left: 242px;
    bottom: -4px;
    width: 17px;
    height: 3px;
}

/* objects table */
.objects {
    font-family: "Liberation Sans", Arial, sans-serif;
    font-size: 5px;
    flex: none;
}

.objects-head {
    display: flex;
    align-items: center;
    height: 14px;
    padding: 1px 0 0 3px;
}

.objects-head h2 {
    flex: 1;
    font-family: Roboto, sans-serif;
    font-size: 6px;
}

.chip {
    gap: 2px;
    width: 40px;
    height: 12px;
    margin-right: 1px;
    background-color: #bdbdbd;
    font-family: Roboto, sans-serif;
    font-weight: bold;
}

.chip.on {
    width: 38px;
    gap: 4px;
    background-color: #999;
    border: 1px solid #83a3b5;
}

.chip .icon {
    width: 6px;
    height: 6px;
    color: #333;
}

.mini {
    width: 13px;
}

.mini .icon {
    width: 7px;
    height: 7px;
}

.table-wrap {
    display: flex;
    height: 82px;
    overflow: hidden;
}

table {
    width: 100%;
    align-self: flex-start;
    table-layout: fixed;
    border-collapse: separate;
    border-spacing: 0;
}

th, td {
    padding: 0 2px;
    text-align: left;
}

th {
    height: 13px;
    padding-left: 4px;
    background-color: #4b4e55;
    border-right: 1px solid #6c6f75;
    color: #fff;
}

td {
    height: 15px;
    background-color: #fff;
    border-bottom: 1px solid #dcdcdc;
}

.check {
    text-align: center;
    line-height: 0;
}

.check input {
    appearance: none;
    display: inline-grid;
    place-items: center;
    width: 7px;
    height: 7px;
    border: 1px solid #a5a5a5;
    border-radius: 1px;
    vertical-align: middle;
}

.check input:checked {
    background-color: #2684c0;
    border-color: #2684c0;
}

.check input:checked::after {
    content: "";
    width: 2px;
    height: 4px;
    border: solid #fff;
    border-width: 0 1px 1px 0;
    transform: rotate(45deg);
}

th.check input {
    border-color: #5b5e64;
}

.flag {
    background: linear-gradient(135deg, #f7c600 50%, transparent 50%) 0 1px / 5px 5px no-repeat #fff;
}

.table-scroll {
    width: 4px;
    flex: none;
    border-top: 13px solid #4b4e55;
}

.table-scroll .thumb {
    display: block;
    height: 62px;
    border-radius: 0 0 2px 2px;
    background-color: #c0c0c0;
}

.pager {
    display: flex;
    align-items: center;
    height: 17px;
    padding: 0 3px 4px 1px;
}

.pager button {
    width: 13px;
}

.pager button .icon {
    width: 6px;
    height: 6px;
}

.pager input {
    width: 11px;
    height: 12px;
    margin: 0 2px;
    padding-left: 2px;
    border: 1px solid #c4c4c4;
}

.pager .count {
    margin-left: auto;
}

/* right actions */
.actions {
    display: flex;
    flex-direction: column;
    gap: 7px;
    width: 75px;
    margin-bottom: 5px;
    border-left: 1px solid #d6d6d6;
    overflow: hidden;
    flex: none;
}

.actions h2 {
    height: 9px;
    margin-bottom: 17px;
    border-bottom: 1px solid #dcdcdc;
    padding: 2px 1px 0;
}

.actions h2 span {
    display: flex;
    align-items: flex-end;
    height: 4px;
    overflow: hidden;
}

.actions button {
    justify-content: flex-start;
    gap: 5px;
    height: 21px;
    margin-left: 4px;
    padding-left: 5px;
    border-radius: 1px 0 0 1px;
    background-color: #cbcbcb;
    color: #949494;
    font-size: 5px;
    font-weight: bold;
    flex: none;
}

.actions .icon {
    width: 11px;
    height: 12px;
}

.actions .current {
    margin-top: -2px;
    background-color: #a4a4a4;
    color: #222;
}
```
